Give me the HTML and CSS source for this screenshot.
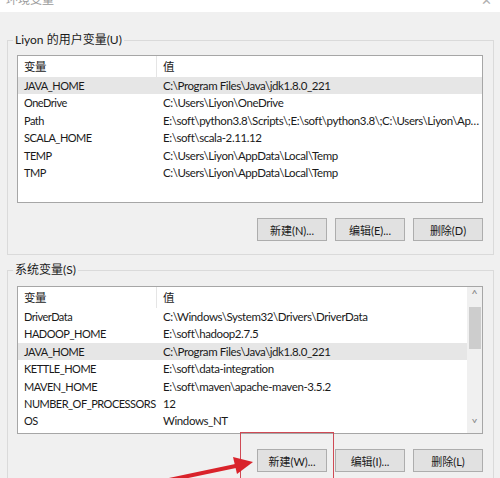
FILE: index.html
```html
<!DOCTYPE html>
<html>
<head>
  <meta charset="UTF-8">
  <title>环境变量</title>
  <link rel="stylesheet" href="styles.css">
</head>
<body>
  <div class="titlebar">
    <span class="title">环境变量</span>
    <span class="close">✕</span>
  </div>

  <div class="dialog">
    <!-- 用户变量 -->
    <fieldset class="group">
      <legend>Liyon 的用户变量(U)</legend>
      <div class="list">
        <div class="row head">
          <div class="col-name">变量</div>
          <div class="col-value">值</div>
        </div>
        <div class="row selected">
          <div class="col-name">JAVA_HOME</div>
          <div class="col-value">C:\Program Files\Java\jdk1.8.0_221</div>
        </div>
        <div class="row">
          <div class="col-name">OneDrive</div>
          <div class="col-value">C:\Users\Liyon\OneDrive</div>
        </div>
        <div class="row">
          <div class="col-name">Path</div>
          <div class="col-value">E:\soft\python3.8\Scripts\;E:\soft\python3.8\;C:\Users\Liyon\AppData\Local\Microsoft\WindowsApps</div>
        </div>
        <div class="row">
          <div class="col-name">SCALA_HOME</div>
          <div class="col-value">E:\soft\scala-2.11.12</div>
        </div>
        <div class="row">
          <div class="col-name">TEMP</div>
          <div class="col-value">C:\Users\Liyon\AppData\Local\Temp</div>
        </div>
        <div class="row">
          <div class="col-name">TMP</div>
          <div class="col-value">C:\Users\Liyon\AppData\Local\Temp</div>
        </div>
      </div>
      <div class="button-bar">
        <button type="button" class="btn">新建(N)...</button>
        <button type="button" class="btn">编辑(E)...</button>
        <button type="button" class="btn">删除(D)</button>
      </div>
    </fieldset>

    <!-- 系统变量 -->
    <fieldset class="group system">
      <legend>系统变量(S)</legend>
      <div class="list has-scroll">
        <div class="rows">
          <div class="row head">
            <div class="col-name">变量</div>
            <div class="col-value">值</div>
          </div>
          <div class="row">
            <div class="col-name">DriverData</div>
            <div class="col-value">C:\Windows\System32\Drivers\DriverData</div>
          </div>
          <div class="row">
            <div class="col-name">HADOOP_HOME</div>
            <div class="col-value">E:\soft\hadoop2.7.5</div>
          </div>
          <div class="row selected">
            <div class="col-name">JAVA_HOME</div>
            <div class="col-value">C:\Program Files\Java\jdk1.8.0_221</div>
          </div>
          <div class="row">
            <div class="col-name">KETTLE_HOME</div>
            <div class="col-value">E:\soft\data-integration</div>
          </div>
          <div class="row">
            <div class="col-name">MAVEN_HOME</div>
            <div class="col-value">E:\soft\maven\apache-maven-3.5.2</div>
          </div>
          <div class="row">
            <div class="col-name">NUMBER_OF_PROCESSORS</div>
            <div class="col-value">12</div>
          </div>
          <div class="row">
            <div class="col-name">OS</div>
            <div class="col-value">Windows_NT</div>
          </div>
        </div>
        <div class="scrollbar">
          <div class="arrow">&#x2C4;</div>
          <div class="track"><div class="thumb"></div></div>
          <div class="arrow">&#x2C5;</div>
        </div>
      </div>
      <div class="button-bar">
        <button type="button" class="btn">新建(W)...</button>
        <button type="button" class="btn">编辑(I)...</button>
        <button type="button" class="btn">删除(L)</button>
      </div>
    </fieldset>
  </div>

  <!-- 标注 -->
  <div class="mark-box"></div>
  <svg class="mark-arrow" width="500" height="478" viewBox="0 0 500 478">
    <line x1="150" y1="484" x2="238" y2="465.5" stroke="#d9232b" stroke-width="4"/>
    <polygon points="253,462 233,457 237,474" fill="#d9232b"/>
  </svg>
</body>
</html>
```

FILE: styles.css
```css
body {
  margin: 0;
  background: #f0f0f0;
  font-family: Lato, "Noto Sans CJK SC", sans-serif;
  font-size: 12px;
  color: #1a1a1a;
  overflow: hidden;
  position: relative;
  height: 478px;
}
.titlebar {
  height: 12px;
  background: #fff;
  position: relative;
  overflow: hidden;
}
.title {
  display: block;
  padding-left: 6px;
  line-height: 14px;
  margin-top: -7px;
  color: #9a9a9a;
}
.close {
  position: absolute;
  right: 8px;
  top: -8px;
  color: #b0b0b0;
  font-size: 13px;
}
.dialog {
  padding: 0 6px 0 7px;
}
.group {
  margin: 20px 0 0;
  padding: 7px 10px 13px 9px;
  border: 1px solid #dadada;
  min-width: 0;
}
.group.system {
  margin-top: 7px;
  padding-top: 8px;
}
.group legend {
  padding: 0 2px;
  margin-left: -4px;
  line-height: 16px;
}
.list {
  height: 146px;
  background: #fff;
  border: 1px solid #a6a6a6;
  overflow: hidden;
  font-size: 11.5px;
  letter-spacing: -0.4px;
}
.list.has-scroll {
  display: flex;
}
.rows {
  flex: 1;
  min-width: 0;
}
.row {
  display: flex;
  height: 17.4px;
  line-height: 17.4px;
  white-space: nowrap;
}
.row.head {
  height: 21px;
  line-height: 21px;
}
.row.selected {
  background: #e6e6e6;
}
.col-name {
  box-sizing: border-box;
  width: 139px;
  padding-left: 6px;
  flex: none;
  font-size: 11px;
  letter-spacing: -0.5px;
}
.head .col-name {
  border-right: 1px solid #e5e5e5;
  font-size: 11.5px;
}
.col-value {
  flex: 1;
  padding-left: 6px;
  padding-right: 2px;
  overflow: hidden;
  text-overflow: ellipsis;
}
.scrollbar {
  width: 15px;
  background: #f0f0f0;
  display: flex;
  flex-direction: column;
  letter-spacing: 0;
}
.arrow {
  height: 17px;
  line-height: 17px;
  text-align: center;
  color: #8a8a8a;
  font-size: 13px;
}
.track {
  flex: 1;
  padding: 3px 1px 0 2px;
}
.thumb {
  height: 42px;
  background: #cdcdcd;
}
.button-bar {
  display: flex;
  justify-content: flex-end;
  gap: 8px;
  margin-top: 15px;
}
.btn {
  width: 70px;
  height: 23px;
  padding: 0;
  background: #e1e1e1;
  border: 1px solid #adadad;
  font-family: inherit;
  font-size: 11px;
  color: #1a1a1a;
}
.mark-box {
  position: absolute;
  left: 240px;
  top: 432px;
  width: 92px;
  height: 60px;
  border: 1px solid #cf4a55;
}
.mark-arrow {
  position: absolute;
  left: 0;
  top: 0;
  pointer-events: none;
}
```
